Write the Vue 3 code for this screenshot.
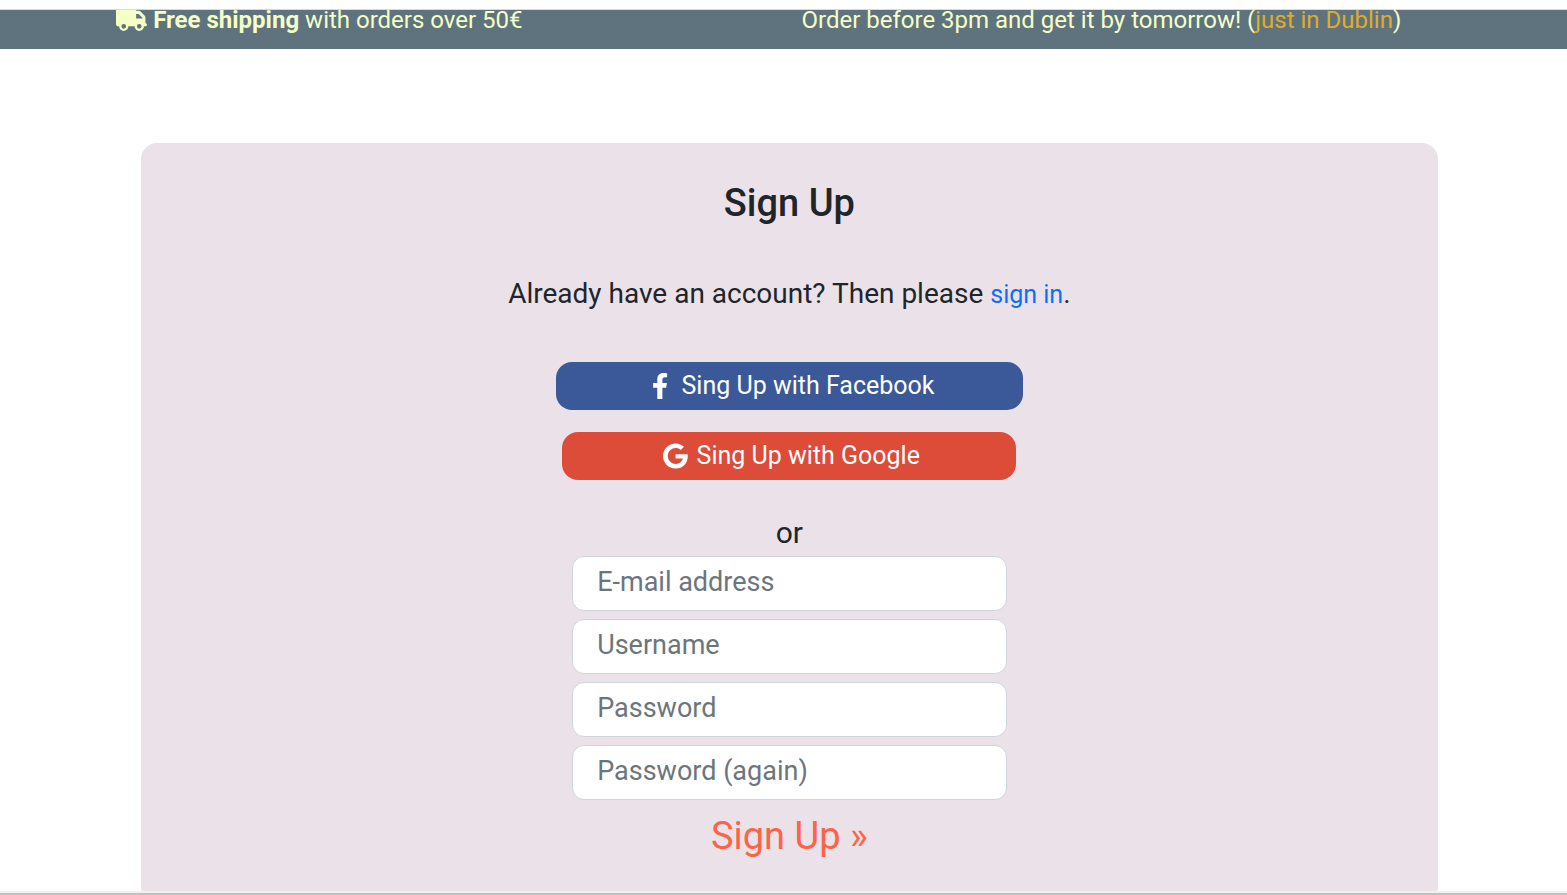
<script setup>
import { reactive } from 'vue'

const form = reactive({ email: '', username: '', password: '', passwordAgain: '' })

const fields = [
  { key: 'email', type: 'email', label: 'E-mail address' },
  { key: 'username', type: 'text', label: 'Username' },
  { key: 'password', type: 'password', label: 'Password' },
  { key: 'passwordAgain', type: 'password', label: 'Password (again)' },
]
</script>

<template>
  <div class="page">
    <aside class="promo">
      <p class="promo-item">
        <svg class="truck" viewBox="0 78 640 434" aria-hidden="true">
          <path d="M48 0C21.500 0 0 21.500 0 48V368c0 26.500 21.500 48 48 48H64c0 53 43 96 96 96s96-43 96-96H384c0 53 43 96 96 96s96-43 96-96h32c17.700 0 32-14.300 32-32s-14.300-32-32-32V288 256 237.300c0-17-6.700-33.300-18.700-45.300L512 114.700c-12-12-28.300-18.700-45.300-18.700H416V48c0-26.500-21.500-48-48-48H48zM416 160h50.700L544 237.300V256H416V160zM112 416a48 48 0 1 1 96 0 48 48 0 1 1-96 0zm368-48a48 48 0 1 1 0 96 48 48 0 1 1 0-96z" />
        </svg>
        <span><strong>Free shipping</strong> with orders over 50€</span>
      </p>
      <p class="promo-item">
        <span>Order before 3pm and get it by tomorrow! (<span class="place">just in Dublin</span>)</span>
      </p>
    </aside>

    <main class="card">
      <h1>Sign Up</h1>
      <p class="intro">Already have an account? Then please <a href="#signin">sign in</a>.</p>

      <button type="button" class="social facebook">
        <svg class="icon-f" viewBox="0 0 320 512" aria-hidden="true">
          <path d="M279.140 288l14.220-92.660h-88.910v-60.130c0-25.350 12.420-50.060 52.240-50.060h40.420V6.260S260.430 0 225.360 0c-73.220 0-121.080 44.380-121.080 124.720v70.620H22.890V288h81.390v224h100.170V288z" />
        </svg>
        <span>Sing Up with Facebook</span>
      </button>
      <button type="button" class="social google">
        <svg class="icon-g" viewBox="0 0 488 512" aria-hidden="true">
          <path d="M488 261.800C488 403.300 391.100 504 248 504 110.800 504 0 393.200 0 256S110.800 8 248 8c66.800 0 123 24.500 166.300 64.900l-67.500 64.900C258.500 52.600 94.300 116.600 94.300 256c0 86.500 69.100 156.600 153.700 156.600 98.200 0 135-70.400 140.800-106.900H248v-85.300h236.100c2.300 12.700 3.900 24.900 3.900 41.400z" />
        </svg>
        <span>Sing Up with Google</span>
      </button>

      <p class="or">or</p>

      <form class="form" @submit.prevent>
        <input
          v-for="field in fields"
          :key="field.key"
          v-model="form[field.key]"
          :type="field.type"
          :placeholder="field.label"
          :aria-label="field.label"
        />
        <button type="submit" class="submit">Sign Up »</button>
      </form>
    </main>
    <footer class="edge"></footer>
  </div>
</template>

<style>
body {
  margin: 0;
  background: #fff;
}
</style>

<style scoped>
.page {
  box-sizing: border-box;
  display: flex;
  flex-direction: column;
  min-height: 100vh;
  padding-top: 9px;
  font-family: Roboto, "Open Sans", sans-serif;
  color: #212529;
}

.promo {
  display: grid;
  grid-template-columns: 640fr 927fr;
  height: 39px;
  padding-right: 3px;
  border-top: 1px solid #d5dade;
  background: #5e737e;
  color: #f5ffc6;
  font-size: 24px;
  line-height: 20px;
}

.promo-item {
  display: flex;
  justify-content: center;
  gap: 6px;
  margin: 0;
  white-space: nowrap;
}

.truck {
  width: 31px;
  height: 21px;
  fill: currentColor;
}

.place {
  color: #e0ac2b;
}

.card {
  flex: 1;
  display: flex;
  flex-direction: column;
  align-items: center;
  box-sizing: border-box;
  margin: 94px 8.250% 0 9%;
  padding: 36px 0 24px;
  border-radius: 16px 16px 2px 2px;
  background: #ebe2e9;
}

h1 {
  margin: 0;
  font-size: 38px;
  font-weight: 500;
  line-height: 48px;
}

.intro {
  margin: 49px 0 0;
  font-size: 28px;
  line-height: 36px;
}

.intro a {
  color: #0d6efd;
  font-size: 25px;
  text-decoration: none;
}

.social {
  display: flex;
  align-items: center;
  justify-content: center;
  height: 48px;
  border: 0;
  border-radius: 16px;
  color: #fff;
  font: 400 25px/32px Roboto, "Open Sans", sans-serif;
}

.social svg {
  height: 26px;
  fill: currentColor;
}

.facebook {
  width: 36%;
  gap: 13px;
  margin-top: 49px;
  padding: 0 0 0 8px;
  background: #3b5998;
}

.google {
  width: 35%;
  gap: 9px;
  margin-top: 22px;
  padding: 0 0 0 4px;
  background: #dd4b39;
}

.or {
  margin: 35px 0 5px;
  font-size: 30px;
  line-height: 36px;
}

.form {
  display: flex;
  flex-direction: column;
  align-items: center;
  gap: 8px;
  width: 33.500%;
}

.form input {
  box-sizing: border-box;
  width: 100%;
  height: 55px;
  padding: 0 24px 4px;
  border: 1px solid #ced4da;
  border-radius: 12px;
  background: #fff;
  color: #212529;
  font: 400 27px/32px Roboto, "Open Sans", sans-serif;
}

.form input::placeholder {
  color: #6c757d;
  opacity: 1;
}

.submit {
  margin-top: 4px;
  padding: 0;
  border: 0;
  background: none;
  color: tomato;
  font: 400 38px/48px Roboto, "Open Sans", sans-serif;
}

.edge {
  height: 2px;
  border-top: 2px solid #f0f0f0;
  background: #c0c0c0;
}
</style>
